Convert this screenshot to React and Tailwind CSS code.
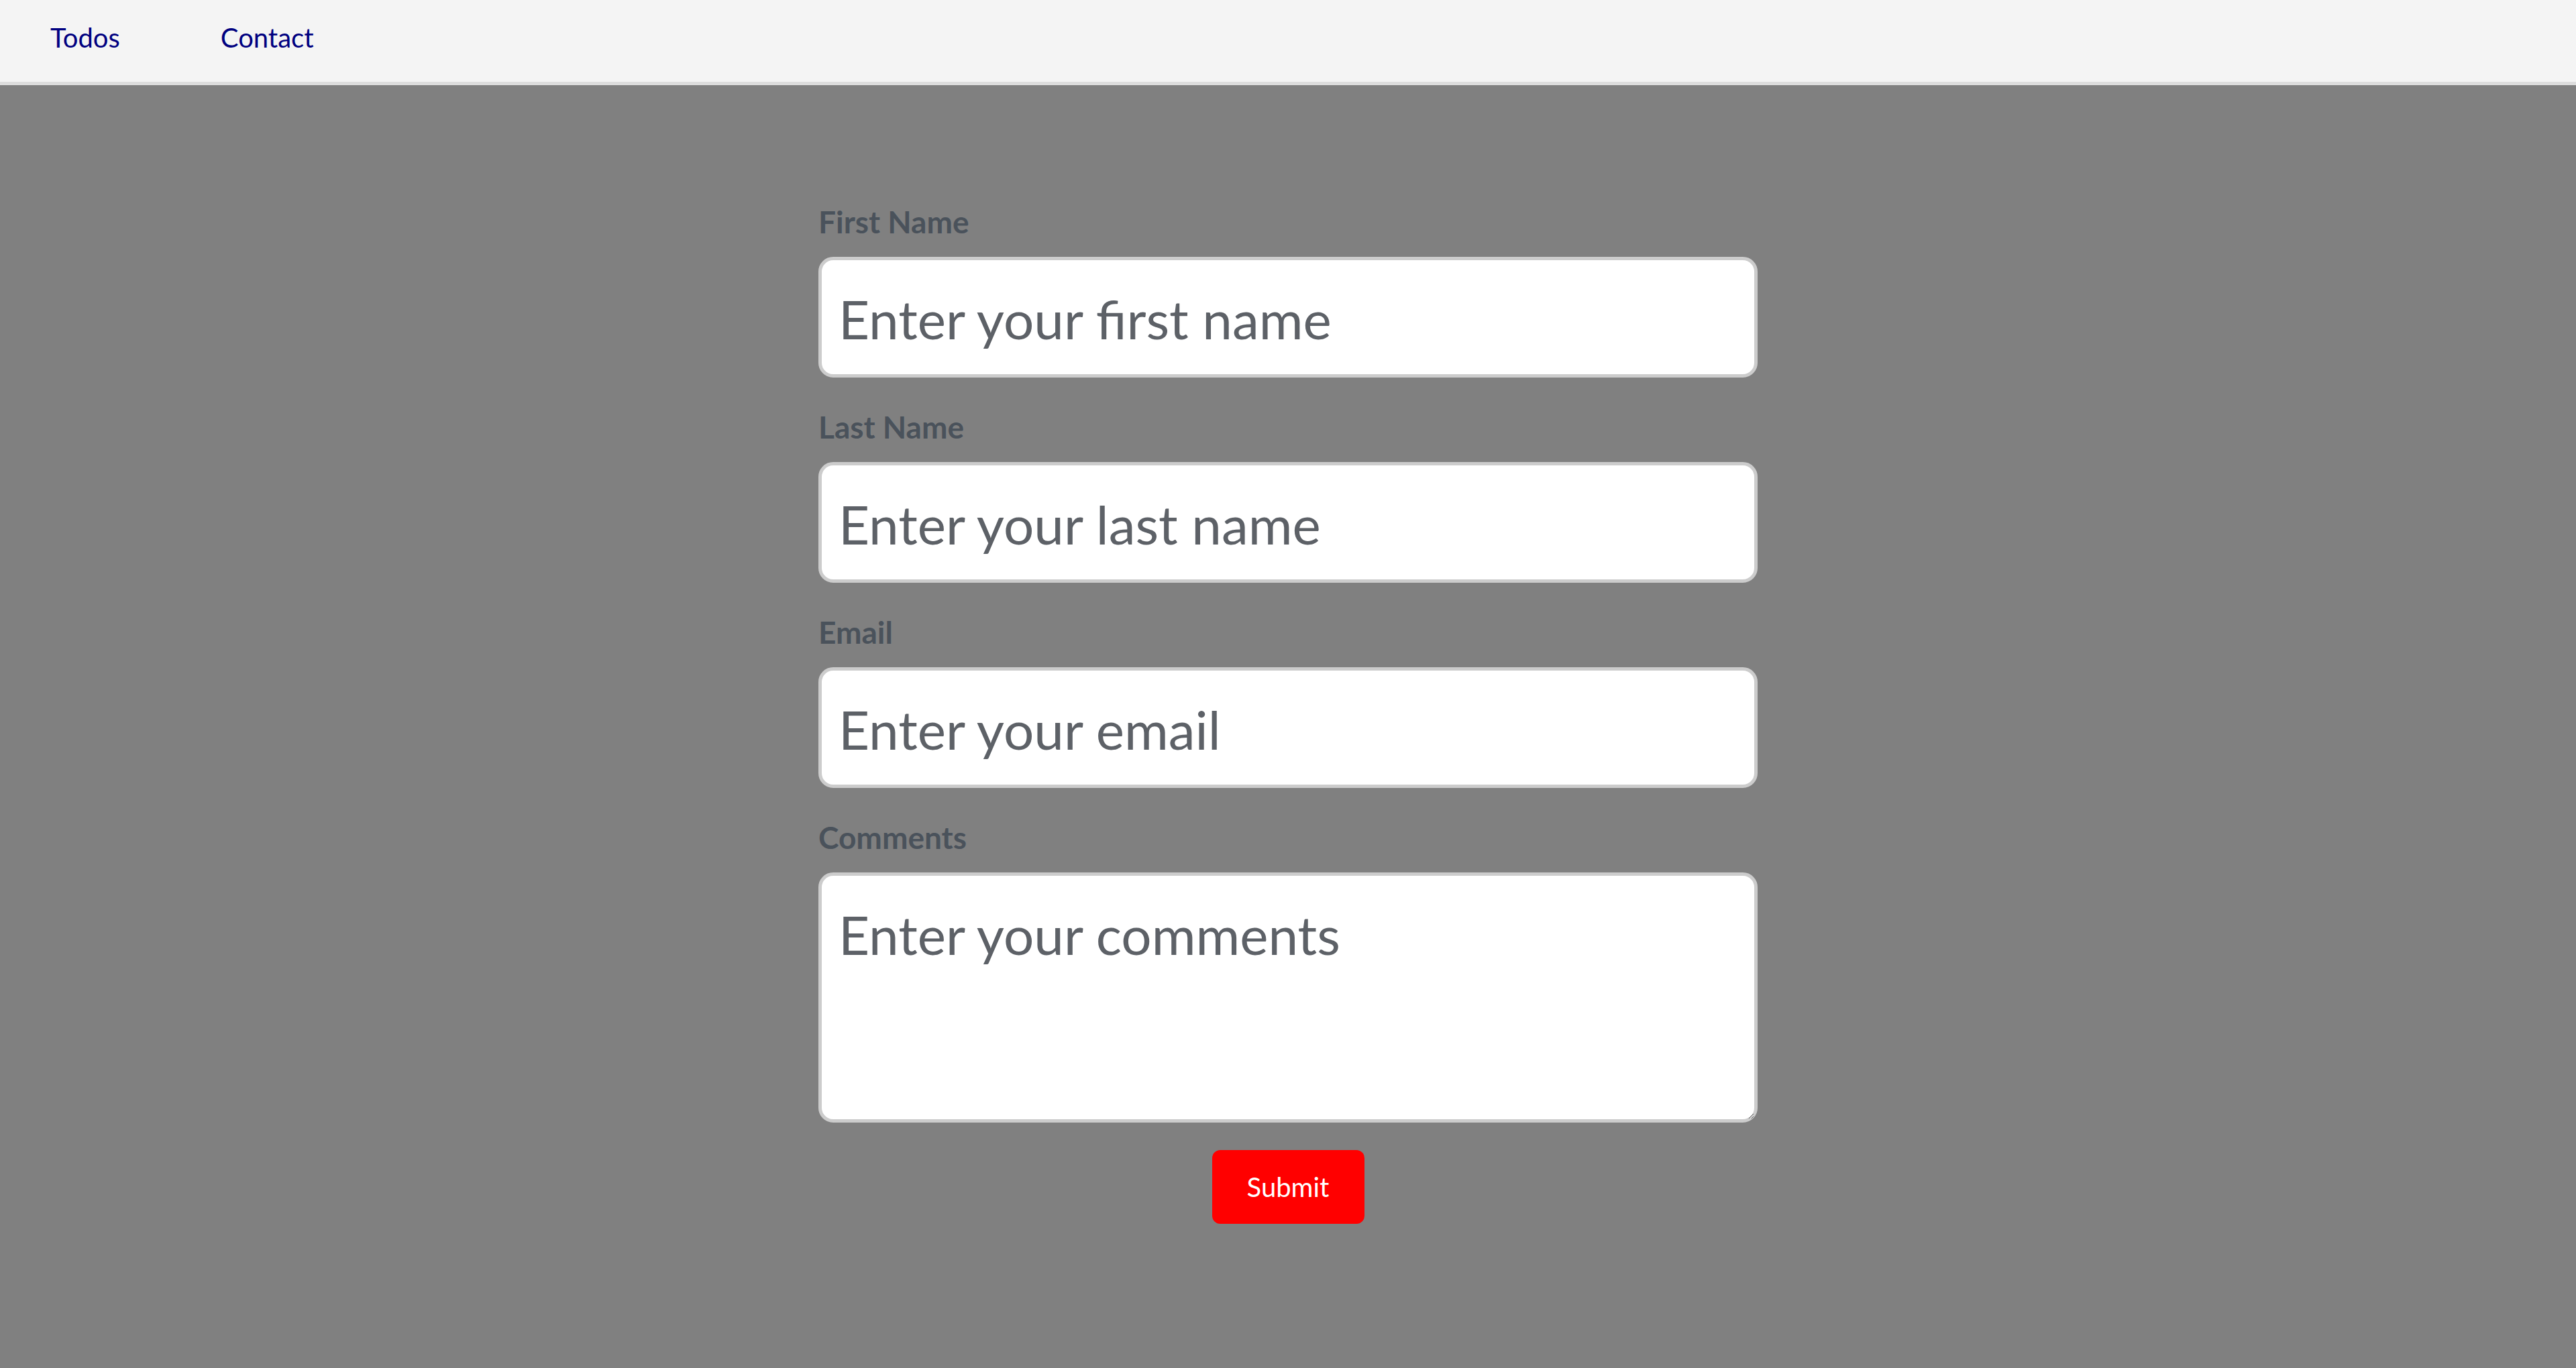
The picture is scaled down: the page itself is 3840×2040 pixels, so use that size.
import React from 'react';

function Field({ label, placeholder, multiline }) {
  return (
    <div className="flex flex-col">
      <label className="block text-[46px] leading-[60px] font-bold text-[#4a525b]">{label}</label>
      {multiline ? (
        <textarea
          placeholder={placeholder}
          className="mt-[22px] h-[373px] w-full rounded-[22px] border-[5px] border-[#cccccc] bg-white pl-[25px] pt-[33px] text-[80px] leading-[109px] text-[#5d6167] placeholder:text-[#5d6167] focus:outline-none"
        />
      ) : (
        <input
          type="text"
          placeholder={placeholder}
          className="mt-[22px] h-[180px] w-full rounded-[22px] border-[5px] border-[#cccccc] bg-white pl-[25px] pt-[3px] text-[80px] text-[#5d6167] placeholder:text-[#5d6167] focus:outline-none"
        />
      )}
    </div>
  );
}

export default function App() {
  return (
    <div className="min-h-screen flex flex-col bg-[#808080] font-['Lato',sans-serif]">
      {/* Nav */}
      <nav className="h-[127px] shrink-0 flex items-center gap-[150px] pl-[75px] pb-[10px] bg-[#f4f4f4] border-b-[5px] border-[#dddddd]">
        <a href="#" className="text-[40px] text-[#000080]">Todos</a>
        <a href="#" className="text-[40px] text-[#000080]">Contact</a>
      </nav>

      {/* Form */}
      <form className="w-[1400px] mx-auto pt-[174px] flex flex-col gap-[44px]">
        <Field label="First Name" placeholder="Enter your first name" />
        <Field label="Last Name" placeholder="Enter your last name" />
        <Field label="Email" placeholder="Enter your email" />
        <div className="flex flex-col">
          <Field label="Comments" placeholder="Enter your comments" multiline />
          <button
            type="button"
            className="mt-[41px] self-center w-[227px] h-[110px] rounded-[12px] bg-[#ff0000] text-[40px] text-white"
          >
            Submit
          </button>
        </div>
      </form>
    </div>
  );
}
